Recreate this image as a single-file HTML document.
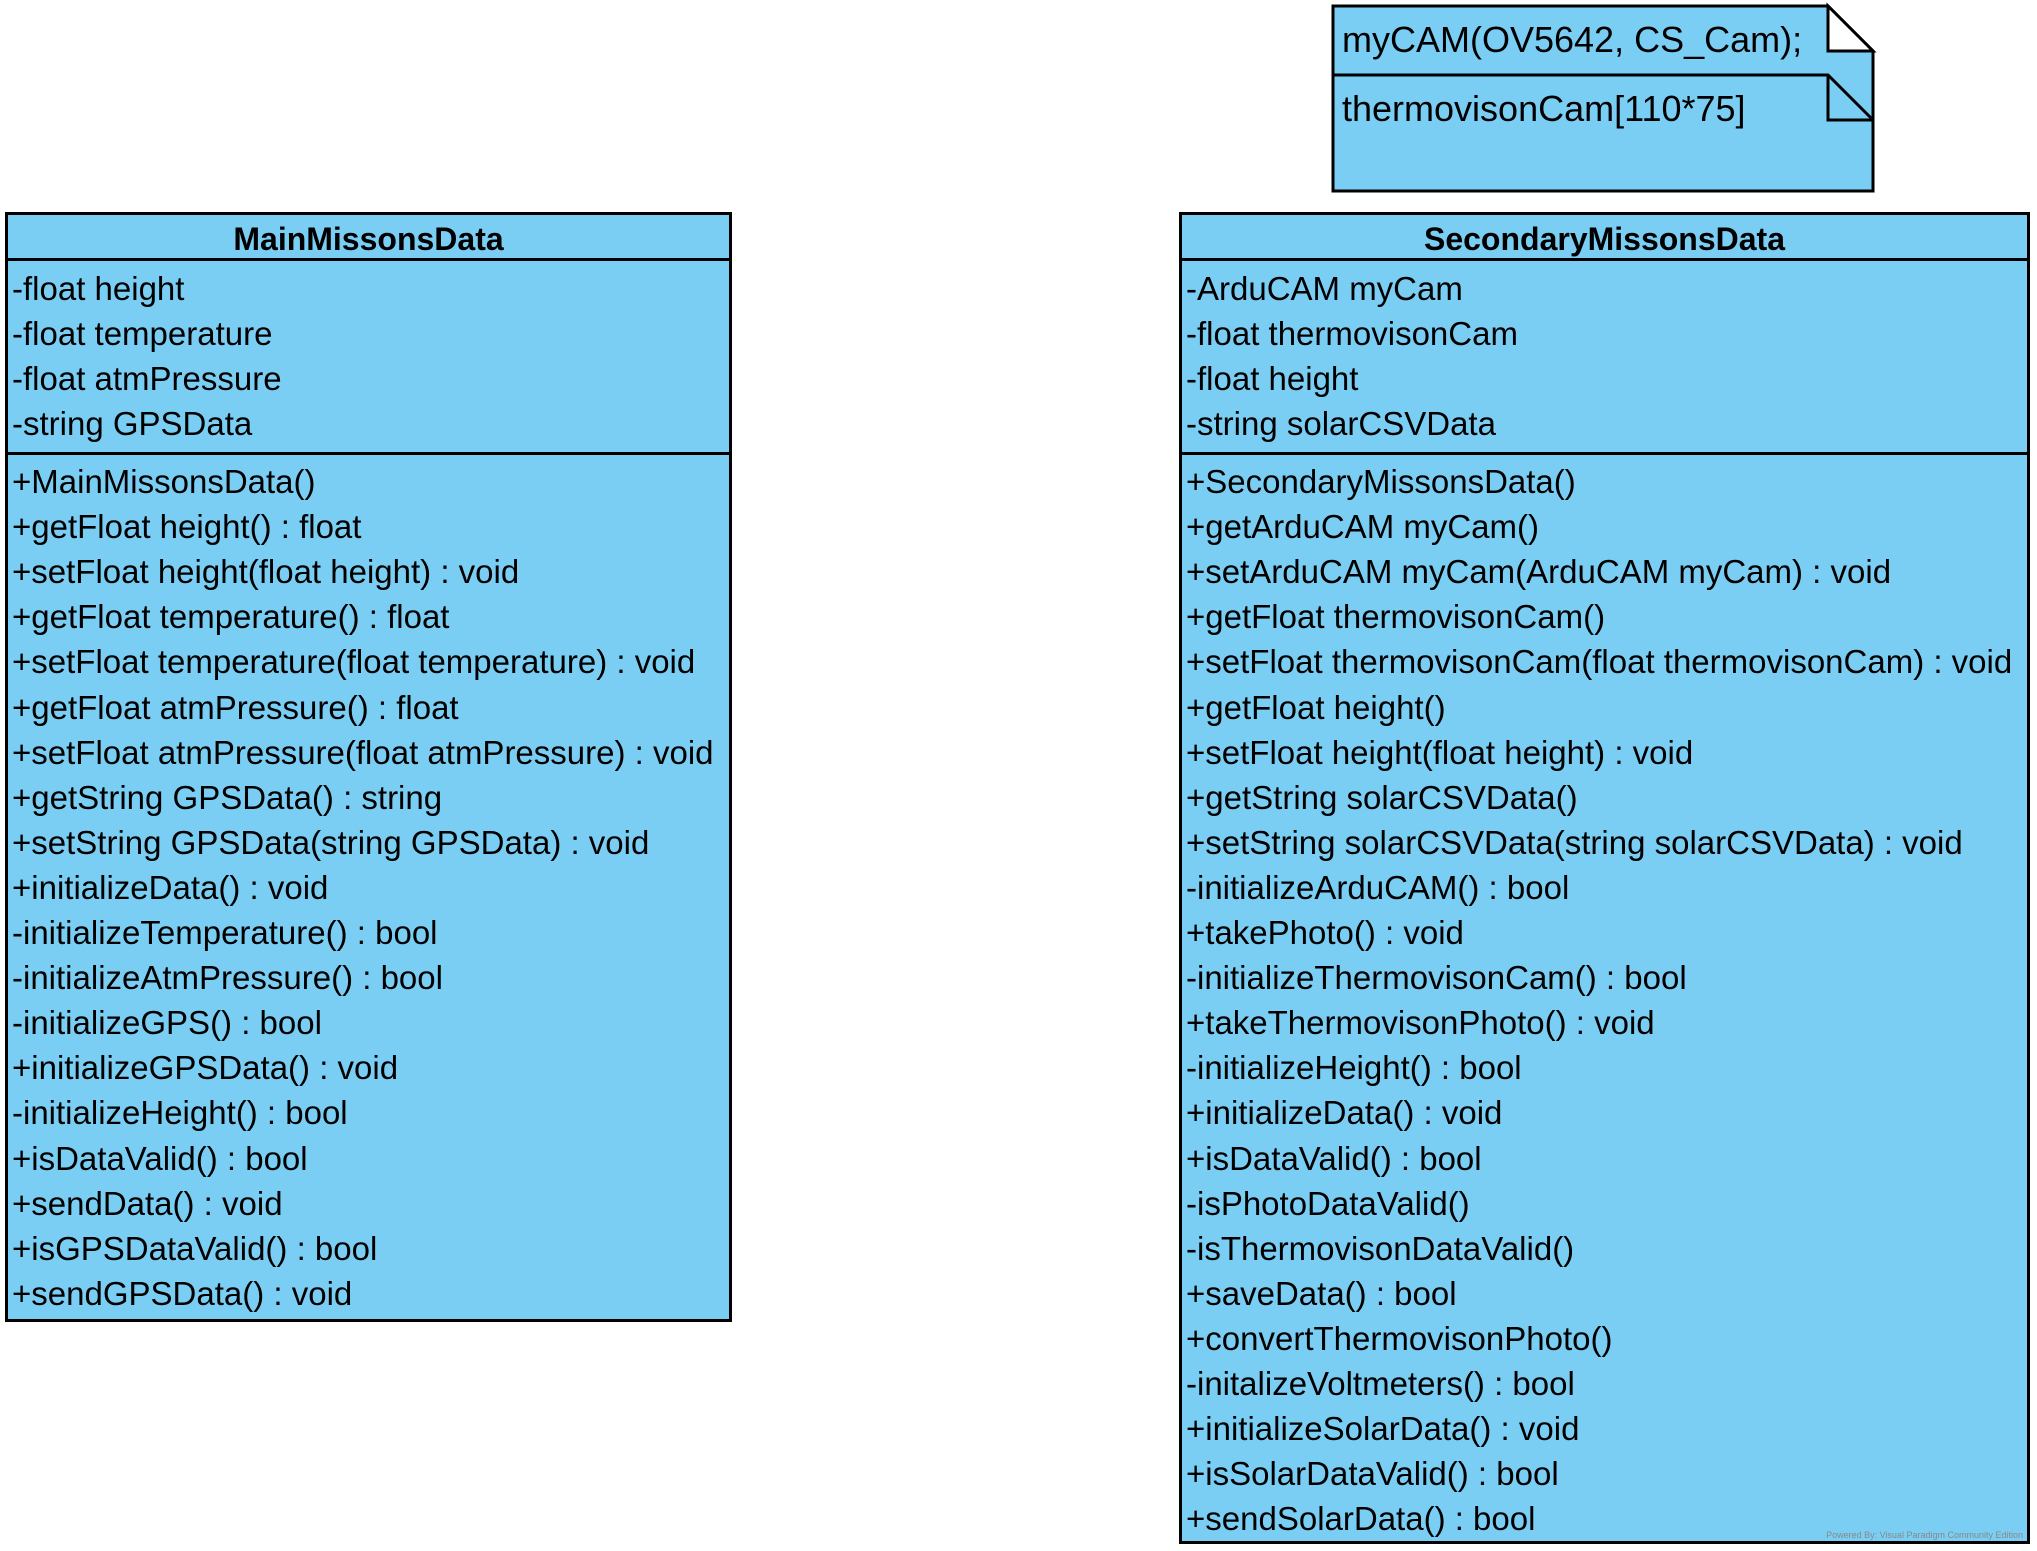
<!DOCTYPE html>
<html><head><meta charset="utf-8"><style>
body{margin:0;width:2037px;height:1551px;background:#fff;position:relative;overflow:hidden;font-family:"Liberation Sans",Arial,sans-serif;color:#000}
.box{position:absolute;background:#7acef4;border:3px solid #000;box-sizing:border-box}
.hl{position:absolute;left:0;right:0;height:0;border-top:3px solid #000}
.t{position:absolute;font-size:33px;white-space:nowrap;line-height:45px;}
.h{position:absolute;left:0;right:0;text-align:center;font-weight:bold;font-size:32px;line-height:40px}
</style></head><body>

<div class="box" style="left:5px;top:212px;width:727px;height:1110px">
 <div class="h" style="top:4px">MainMissonsData</div>
 <div class="hl" style="top:43px"></div>
 <div class="hl" style="top:237px"></div>
</div>
<div class="box" style="left:1179px;top:212px;width:851px;height:1332px">
 <div class="h" style="top:4px">SecondaryMissonsData</div>
 <div class="hl" style="top:43px"></div>
 <div class="hl" style="top:237px"></div>
 <div style="position:absolute;right:4px;bottom:1px;font-size:9px;color:#888">Powered By: Visual Paradigm Community Edition</div>
</div>

<svg style="position:absolute;left:0;top:0" width="2037" height="1551">
 <path d="M1333 6 H1828 L1873 51 V191 H1333 Z" fill="#7acef4" stroke="#000" stroke-width="3"/>
 <path d="M1828 6 L1873 51 H1828 Z" fill="#fff" stroke="#000" stroke-width="3"/>
 <path d="M1333 75 H1828 L1873 120" fill="none" stroke="#000" stroke-width="3"/>
 <path d="M1828 75 V120 H1873" fill="none" stroke="#000" stroke-width="3"/>
</svg>
<div class="t" style="left:1342px;top:17px;font-size:36px">myCAM(OV5642, CS_Cam);</div>
<div class="t" style="left:1342px;top:86px;font-size:36px">thermovisonCam[110*75]</div>

<script>
function rows(x,y0,arr){let h='';arr.forEach((s,i)=>{h+=`<div class="t" style="left:${x}px;top:${y0+i*45.1}px">${s}</div>`});document.body.insertAdjacentHTML('beforeend',h);}
rows(12,266,["-float height","-float temperature","-float atmPressure","-string GPSData"]);
rows(12,459,["+MainMissonsData()","+getFloat height() : float","+setFloat height(float height) : void","+getFloat temperature() : float","+setFloat temperature(float temperature) : void","+getFloat atmPressure() : float","+setFloat atmPressure(float atmPressure) : void","+getString GPSData() : string","+setString GPSData(string GPSData) : void","+initializeData() : void","-initializeTemperature() : bool","-initializeAtmPressure() : bool","-initializeGPS() : bool","+initializeGPSData() : void","-initializeHeight() : bool","+isDataValid() : bool","+sendData() : void","+isGPSDataValid() : bool","+sendGPSData() : void"]);
rows(1186,266,["-ArduCAM myCam","-float thermovisonCam","-float height","-string solarCSVData"]);
rows(1186,459,["+SecondaryMissonsData()","+getArduCAM myCam()","+setArduCAM myCam(ArduCAM myCam) : void","+getFloat thermovisonCam()","+setFloat thermovisonCam(float thermovisonCam) : void","+getFloat height()","+setFloat height(float height) : void","+getString solarCSVData()","+setString solarCSVData(string solarCSVData) : void","-initializeArduCAM() : bool","+takePhoto() : void","-initializeThermovisonCam() : bool","+takeThermovisonPhoto() : void","-initializeHeight() : bool","+initializeData() : void","+isDataValid() : bool","-isPhotoDataValid()","-isThermovisonDataValid()","+saveData() : bool","+convertThermovisonPhoto()","-initalizeVoltmeters() : bool","+initializeSolarData() : void","+isSolarDataValid() : bool","+sendSolarData() : bool"]);
</script>
</body></html>
